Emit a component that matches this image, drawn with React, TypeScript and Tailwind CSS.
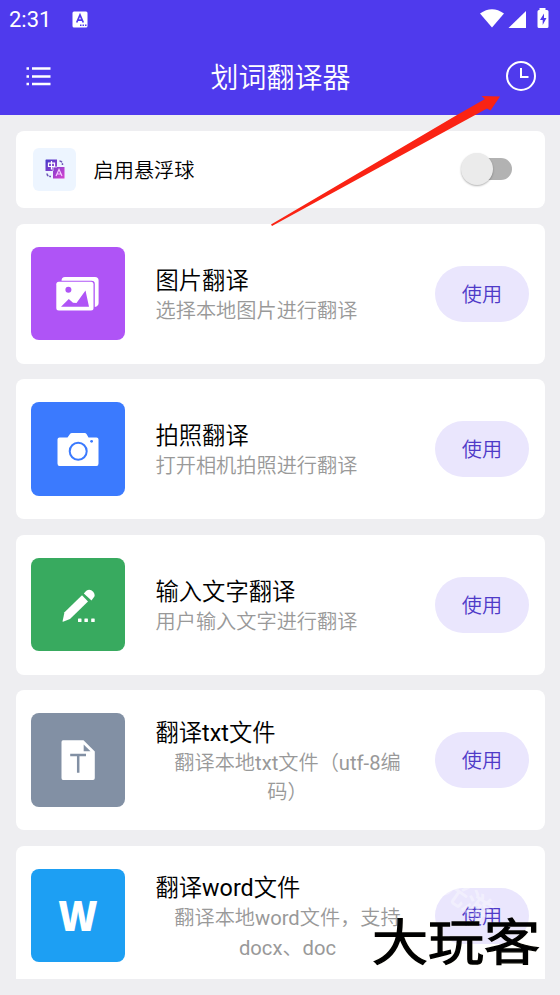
import { type ReactNode } from "react"

type Feature = {
  title: string
  hint: string
  color: string
  icon: ReactNode
}

const PictureIcon = () => (
  <svg className="w-[44px] h-[44px]" viewBox="0 0 44 44">
    <path d="M5.500 8.800Q5.500 5 9 5H39Q42.600 5 42.600 8.500V31Q42.600 34 38.800 35V12Q38.800 8.800 35.500 8.800Z" fill="#fff" />
    <rect x="0.300" y="9.800" width="37.200" height="28.700" rx="2.500" fill="#fff" />
    <circle cx="12.400" cy="17.700" r="3" fill="#af54f6" />
    <path d="M5 34.800L12.800 27L17 30.800L20.500 31L29.500 18.500L33 34.800Z" fill="#af54f6" />
  </svg>
)

const CameraIcon = () => (
  <svg className="w-[44px] h-[44px]" viewBox="0 0 44 44">
    <path d="M3.500 10.500H11.500L14 7Q14.500 6 16 6H28.500Q30 6 30.500 7L32.500 10.500H40.500Q42.500 10.500 42.500 12.500V36.500Q42.500 39 40.500 39H3.500Q1.500 39 1.500 36.500V12.500Q1.500 10.500 3.500 10.500Z" fill="#fff" />
    <circle cx="22.200" cy="24.300" r="8.500" fill="none" stroke="#3b7afe" strokeWidth="2" />
    <circle cx="35.600" cy="14.300" r="1.400" fill="#3b7afe" />
  </svg>
)

const PencilIcon = () => (
  <svg className="w-[44px] h-[44px]" viewBox="0 0 44 44" fill="#fff">
    <path d="M6.500 38.500L8.500 29.300L26 12.200L32 18.500L14 36L7 38.800Z" />
    <path d="M27.800 10.500L30.300 7.800Q34 5.500 37.200 8.700Q40 12.500 37.500 14.800L35.500 17.500Z" />
    <rect x="22" y="35.500" width="3.500" height="3.500" rx="0.500" />
    <rect x="28.400" y="35.500" width="3.500" height="3.500" rx="0.500" />
    <rect x="35.200" y="35.500" width="3.500" height="3.500" rx="0.500" />
  </svg>
)

const TextFileIcon = () => (
  <svg className="w-[44px] h-[44px]" viewBox="0 0 44 44">
    <path d="M7 2.200H27.500L38.800 13.500V40Q38.800 42 37 42H7Q5.500 42 5.500 40V4Q5.500 2.200 7 2.200Z" fill="#fff" />
    <path d="M27.700 6.500V13.200H34.500Z" fill="#8290a4" />
    <path d="M14.200 17H30M22.200 17V34.800" stroke="#8290a4" strokeWidth="2.500" fill="none" />
  </svg>
)

const WordIcon = () => (
  <span className="mb-[2px] scale-x-90 text-white font-extrabold text-[42px] leading-none font-['Open_Sans','Noto_Sans',sans-serif]">W</span>
)

const features: Feature[] = [
  { title: "图片翻译", hint: "选择本地图片进行翻译", color: "bg-[#af54f6]", icon: <PictureIcon /> },
  { title: "拍照翻译", hint: "打开相机拍照进行翻译", color: "bg-[#3b7afe]", icon: <CameraIcon /> },
  { title: "输入文字翻译", hint: "用户输入文字进行翻译", color: "bg-[#38aa5f]", icon: <PencilIcon /> },
  { title: "翻译txt文件", hint: "翻译本地txt文件（utf-8编\n码）", color: "bg-[#8290a4]", icon: <TextFileIcon /> },
  { title: "翻译word文件", hint: "翻译本地word文件，支持\ndocx、doc", color: "bg-[#1d9ff3]", icon: <WordIcon /> },
]

const StatusBar = () => (
  <div className="flex h-[38px] items-center justify-between pl-[9px] pr-[10px] text-white">
    <div className="flex items-center">
      <span className="w-[63px] pt-[2px] text-[22px] leading-none">2:31</span>
      <svg className="w-[16px] h-[17px]" viewBox="0 0 16 17">
        <rect x="0.500" y="0.500" width="15" height="16" rx="1.500" fill="#fff" />
        <path d="M4.700 11.500L8 3.800L11.300 11.500M6 9.200H10" stroke="#4f3aed" strokeWidth="1.700" fill="none" />
        <path d="M8 14.300H15" stroke="#4f3aed" strokeWidth="1.400" strokeDasharray="1.500 1" />
      </svg>
    </div>
    <svg className="w-[72px] h-[22px]" viewBox="0 0 72 22" fill="#fff">
      <path d="M2 5.500Q14 -3 26 5.500L14 19.500Z" />
      <path d="M30.500 20L48 3V20Z" />
      <path fillRule="evenodd" d="M61.500 0H67.500V2H69Q70.500 2 70.500 3.500V18.500Q70.500 20 69 20H61Q59.500 20 59.500 18.500V3.500Q59.500 2 61 2H61.500ZM66 5.500L62 12H64.700V17L68.500 10H66Z" />
    </svg>
  </div>
)

const Header = () => (
  <header className="h-[115px] bg-[#4f3aed]">
    <StatusBar />
    <div className="flex h-[76px] items-center justify-between pl-[26px] pr-[24px]">
      <svg className="w-[30px] h-[22px]" viewBox="0 0 30 22" stroke="#fff" strokeWidth="2.500">
        <path d="M0.500 3.500H3M6 3.500H24.500M0.500 11.500H3M6 11.500H24.500M0.500 19H3M6 19H24.500" />
      </svg>
      <h1 className="pt-[5px] pr-px text-[28px] leading-none text-white">划词翻译器</h1>
      <svg className="w-[30px] h-[30px]" viewBox="0 0 30 30" fill="none" stroke="#fff" strokeWidth="2">
        <circle cx="15" cy="15" r="14" />
        <path d="M15 7V16H22.500" />
      </svg>
    </div>
  </header>
)

const FloatingBallCard = () => (
  <div className="flex h-[77.500px] shrink-0 items-center rounded-lg bg-white pl-[17.500px] pr-[32.500px]">
    <div className="flex size-[43px] items-center justify-center rounded-md bg-[#edf5ff]">
      <svg className="size-[20px]" viewBox="0 0 20 20">
        <defs>
          <linearGradient id="ball" x1="0" y1="0" x2="1" y2="1">
            <stop offset="0" stopColor="#453bc9" />
            <stop offset="1" stopColor="#d843d0" />
          </linearGradient>
        </defs>
        <path d="M1 0.500H12V8H19.500V19.500H8V12H0.500V1Z" fill="url(#ball)" />
        <path d="M3.500 4.200H9.500V7.500H3.500ZM6.500 2V10.500" fill="none" stroke="#fff" strokeWidth="1.200" />
        <path d="M8 12V8H12" fill="none" stroke="#edf5ff" strokeWidth="0.800" />
        <path d="M11 17L14 10.500L17 17M12 15H16" fill="none" stroke="#f5c9ff" strokeWidth="1.200" />
        <path d="M14.500 2Q17.500 2 17.500 6M2 14.500Q2 17.500 6 17.500" fill="none" stroke="#6b55b5" strokeWidth="1.500" strokeDasharray="3 1" />
      </svg>
    </div>
    <span className="ml-[17.500px] flex-1 pt-[3px] text-[20.200px] leading-none">启用悬浮球</span>
    <div className="flex h-[22px] w-[50px] items-center rounded-full bg-gradient-to-r from-transparent from-30% to-[#b2b2b2] to-30%">
      <span className="-ml-px size-[32px] shrink-0 rounded-full bg-[#ebebeb] shadow-[0_1px_2px_rgba(0,0,0,0.3)]" />
    </div>
  </div>
)

const FeatureCard = ({ info }: { info: Feature }) => (
  <div className="flex h-[140px] shrink-0 items-center rounded-lg bg-white pl-[15.500px] pr-[15.500px]">
    <div className={`flex size-[93.500px] shrink-0 items-center justify-center rounded-lg ${info.color}`}>
      {info.icon}
    </div>
    <div className="ml-[31px] flex w-[264px] flex-col items-start pt-[5px]">
      <p className="text-[23.300px] leading-[31px]">{info.title}</p>
      <p className={`whitespace-pre-line text-[20.200px] leading-[29.500px] text-[#999] ${info.hint.includes("\n") ? "w-full text-center" : ""}`}>
        {info.hint}
      </p>
    </div>
    <button className="ml-auto h-[56px] w-[94px] shrink-0 rounded-full bg-[#eae6fd] pt-[3px] text-[20.200px] text-[#4f3ac8]">使用</button>
  </div>
)

export default function App() {
  return (
    <div className="relative h-[995px] w-[560px] overflow-hidden bg-[#eeeef1] font-[Roboto,'Noto_Sans_CJK_SC_DemiLight','Noto_Sans_CJK_SC',sans-serif] text-black">
      <Header />
      <main className="flex h-[864px] flex-col gap-[15.500px] overflow-hidden px-[15.500px] pt-[15.500px]">
        <FloatingBallCard />
        {features.map((feature) => (
          <FeatureCard key={feature.title} info={feature} />
        ))}
      </main>

      {/* pointer to the history button */}
      <svg className="absolute left-[260px] top-[90px] h-[140px] w-[245px]" viewBox="0 0 245 140">
        <path d="M11 134.500L197 25L225 9L221.500 6L240 6.500L230.500 20.500L227 18.500L217 24L12 136Z" fill="#fa2314" />
      </svg>

      <span className="absolute left-[438px] top-[886px] rotate-[35deg] text-[28px] font-bold leading-none text-white/40">光游</span>
      <span className="absolute left-[372px] top-[915px] scale-y-[0.88] whitespace-nowrap text-[56px] leading-none text-black [-webkit-text-stroke:1.500px_#000] [text-shadow:0_0_2px_#f0e8b8]">大玩客</span>
    </div>
  )
}
